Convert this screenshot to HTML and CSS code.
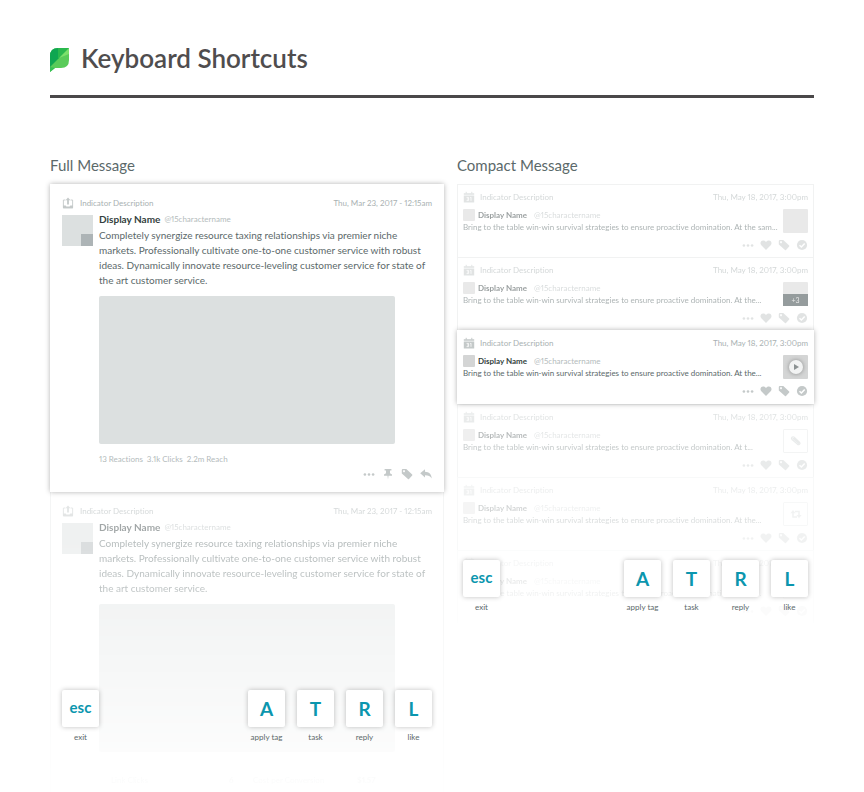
FILE: index.html
```html
<!DOCTYPE html>
<html lang="en">
<head>
<meta charset="utf-8">
<meta name="viewport" content="width=device-width, initial-scale=1">
<title>Keyboard Shortcuts</title>
<link rel="stylesheet" href="styles.css">
</head>
<body>
<svg class="sprite" aria-hidden="true">
  <symbol id="outbox" viewBox="0 0 12 12"><path d="M3.400 3H1.400v7.800h9.200V3h-2" fill="none" stroke="currentColor" stroke-width=".9"/><path d="M1 8.600h2.600l.8 1h3.200l.8-1H11v2.600H1z" fill="currentColor"/><path d="M6 .4l2.400 2.800H6.900v4.400H5.100V3.200H3.600z" fill="currentColor"/></symbol>
  <symbol id="calendar" viewBox="0 0 12 12"><path d="M.8 2.200h10.400v1.600H.8zM.8 4.500h10.400V11.500H.8z" fill="currentColor"/><path d="M3.200 .8v2M8.800 .8v2" stroke="currentColor" stroke-width="1"/><path d="M3.600 6.400h2v3.200h-2M4 8h1.600M7.200 6.600l.8-.4v3.600" fill="none" stroke="#fff" stroke-width=".8"/></symbol>
  <symbol id="dots" viewBox="0 0 12 12"><g fill="currentColor"><circle cx="1.900" cy="6.500" r="1.300"/><circle cx="6" cy="6.500" r="1.300"/><circle cx="10.100" cy="6.500" r="1.300"/></g></symbol>
  <symbol id="pin" viewBox="0 0 12 12"><path d="M2.600 1h6.800v1.600H8v2.700l2 1.300v1.200H6.500L6 11.500l-.5-3.700H2V6.600l2-1.300V2.600H2.600z" fill="currentColor"/></symbol>
  <symbol id="tag" viewBox="0 0 12 12"><path fill-rule="evenodd" d="M.8 2Q.8 1 1.800 1H5.300L11.200 6.600Q11.600 7.100 11.200 7.600L8 11Q7.500 11.400 7 11L.8 5.400zM3 2.200a.95.95 0 1 0 .01 0z" fill="currentColor"/></symbol>
  <symbol id="reply" viewBox="0 0 12 12"><path d="M.2 5.300L5 1.200v2.500c4 .1 6.600 2.400 6.700 6.800C10.400 8.200 8.400 7.200 5 7.200v2.300z" fill="currentColor"/></symbol>
  <symbol id="heart" viewBox="0 0 12 12"><path d="M6 11L1.300 6.300C-.4 4.400.6 1.500 3.100 1.500 4.500 1.500 5.500 2.100 6 3 6.500 2.100 7.500 1.500 8.900 1.500c2.500 0 3.500 2.900 1.800 4.800z" fill="currentColor"/></symbol>
  <symbol id="check" viewBox="0 0 12 12"><circle cx="6" cy="6" r="5.100" fill="currentColor"/><path d="M3.500 6.200l1.900 1.800 3.300-3.600" fill="none" stroke="#fff" stroke-width="1.500"/></symbol>
  <symbol id="clip" viewBox="0 0 12 12"><path d="M3 5.200l4.500 4.100c1.600 1.200 3.500-.7 2-2.200L4.200 2.200C2.600.9.500 2.900 2 4.500l5 4.400M3 3.400l5.500 5.100M4.200 3.300l5 4.600" fill="none" stroke="currentColor" stroke-width="1.100" stroke-linecap="round"/></symbol>
  <symbol id="retweet" viewBox="0 0 12 12"><path d="M3 4v5h4M9 8V3.500H5" fill="none" stroke="currentColor" stroke-width="1.500"/><path d="M.5 5.200L3 2l2.500 3.200zM6.500 7L9 10.200 11.500 7z" fill="currentColor"/></symbol>
</svg>

<header class="page-head">
  <svg class="logo" viewBox="0 0 19 24" aria-hidden="true">
    <path d="M0 24V8Q0 0 8 0H19V12Q19 20 11 20H5Z" fill="#59cb59"/>
    <path d="M8 0H19L0 19V8Q0 0 8 0Z" fill="#0fa651"/>
    <path d="M8 0H19L8 11Z" fill="#29b84d"/>
    <path d="M19 0V6L9 10Z" fill="#7be06b"/>
    <path d="M0 19V24L5 20Z" fill="#36c155"/>
  </svg>
  <h1>Keyboard Shortcuts</h1>
</header>

<main class="columns">
  <section class="panel">
    <h2>Full Message</h2>
    <div class="stage">
      <article class="full active">
        <div class="meta"><svg class="icon"><use href="#outbox"/></svg><span>Indicator Description</span><time>Thu, Mar 23, 2017 - 12:15am</time></div>
        <div class="content">
          <div class="avatar"></div>
          <div class="body">
            <div class="who"><strong>Display Name</strong><span>@15charactername</span></div>
            <p>Completely synergize resource taxing relationships via premier niche<br>markets. Professionally cultivate one-to-one customer service with robust<br>ideas. Dynamically innovate resource-leveling customer service for state of<br>the art customer service.</p>
            <div class="media"></div>
            <div class="stats"><span>13 Reactions</span><span>3.1k Clicks</span><span>2.2m Reach</span></div>
          </div>
        </div>
        <div class="actions">
          <button aria-label="More"><svg class="icon"><use href="#dots"/></svg></button>
          <button aria-label="Pin"><svg class="icon"><use href="#pin"/></svg></button>
          <button aria-label="Tag"><svg class="icon"><use href="#tag"/></svg></button>
          <button aria-label="Reply"><svg class="icon"><use href="#reply"/></svg></button>
        </div>
      </article>
      <article class="full faded">
        <div class="meta"><svg class="icon"><use href="#outbox"/></svg><span>Indicator Description</span><time>Thu, Mar 23, 2017 - 12:15am</time></div>
        <div class="content">
          <div class="avatar"></div>
          <div class="body">
            <div class="who"><strong>Display Name</strong><span>@15charactername</span></div>
            <p>Completely synergize resource taxing relationships via premier niche<br>markets. Professionally cultivate one-to-one customer service with robust<br>ideas. Dynamically innovate resource-leveling customer service for state of<br>the art customer service.</p>
            <div class="media"></div>
            <div class="results"><span>Link Clicks</span><b>6</b><span>Cost per Conversion</span><b>$1.57</b></div>
          </div>
        </div>
      </article>
      <div class="keys keys-full">
        <div class="key word"><kbd>esc</kbd><span>exit</span></div>
        <div class="key"><kbd>A</kbd><span>apply tag</span></div>
        <div class="key"><kbd>T</kbd><span>task</span></div>
        <div class="key"><kbd>R</kbd><span>reply</span></div>
        <div class="key"><kbd>L</kbd><span>like</span></div>
      </div>
    </div>
  </section>

  <section class="panel">
    <h2>Compact Message</h2>
    <div class="stage">
      <div class="list" id="list"></div>
      <div class="keys keys-compact">
        <div class="key word"><kbd>esc</kbd><span>exit</span></div>
        <div class="key"><kbd>A</kbd><span>apply tag</span></div>
        <div class="key"><kbd>T</kbd><span>task</span></div>
        <div class="key"><kbd>R</kbd><span>reply</span></div>
        <div class="key"><kbd>L</kbd><span>like</span></div>
      </div>
    </div>
  </section>
</main>
<script src="messages.js"></script>
</body>
</html>
```
FILE: styles.css
```css
* { box-sizing: border-box; }

body {
  margin: 0;
  padding: 39px 50px 0;
  background: #fff;
  color: #5b696a;
  font-family: Lato, "Open Sans", sans-serif;
  font-size: 8px;
  line-height: 12px;
  font-variant-ligatures: none;
  font-variant-numeric: proportional-nums;
}

.sprite { position: absolute; width: 0; height: 0; }

.page-head {
  display: flex;
  align-items: center;
  gap: 12px;
  padding-bottom: 18px;
  border-bottom: 3px solid #4a4849;
}
.logo { width: 19px; height: 24px; margin-top: 4px; }
h1 {
  margin: 0;
  color: #4f4d4e;
  font-size: 26px;
  line-height: 38px;
  font-weight: 600;
}

.columns {
  display: grid;
  grid-template-columns: 394fr 357fr;
  gap: 13px;
  align-items: start;
  padding-top: 57px;
}
h2 {
  margin: 0 0 9px;
  font-size: 15px;
  line-height: 20px;
  font-weight: 400;
}
.stage { position: relative; }

.icon { display: block; width: 12px; height: 12px; }
.meta {
  display: flex;
  align-items: center;
  color: #a9b1b2;
  white-space: nowrap;
}
.meta .icon { color: #c4c9c9; }
.meta time { margin-left: auto; }
.actions { display: flex; justify-content: flex-end; color: #c4c9c9; }
.actions button {
  padding: 0;
  border: 0;
  background: none;
  color: inherit;
}
.active {
  position: relative;
  z-index: 1;
  background: #fff;
  box-shadow: 0 0 5px rgba(0, 0, 0, .3);
}

.full { padding: 12px; }
.full .meta { gap: 6px; height: 14px; margin-bottom: 3px; }
.content { display: flex; gap: 6px; }
.avatar {
  width: 31px;
  height: 31px;
  flex: none;
  display: flex;
  align-items: flex-end;
  justify-content: flex-end;
  margin-top: 2px;
  background: #dce0e0;
}
.avatar::after { content: ""; width: 12px; height: 12px; background: #adb4b6; }
.body { flex: 1; min-width: 0; }
.who { display: flex; gap: 4px; white-space: nowrap; color: #b4bbbc; }
.who strong { color: #343f40; font-size: 10px; font-weight: 700; }
.body p {
  margin: 3px 0 8px;
  font-size: 10px;
  line-height: 15px;
  white-space: nowrap;
}
.media {
  width: 89%;
  height: 148px;
  border-radius: 2px;
  background: #dce0e0;
}
.stats { display: flex; gap: 4px; margin: 9px 0 3px; color: #b4bbbc; }
.full .actions { gap: 7px; }

.full.faded {
  border: solid #e8eaea;
  border-width: 0 1px;
  padding: 12px 11px 0;
  mask-image: linear-gradient(rgba(0, 0, 0, .5), rgba(0, 0, 0, .38) 35%, rgba(0, 0, 0, .1) 85%, rgba(0, 0, 0, .04));
}
.results {
  display: grid;
  grid-template-columns: 118px 24px 104px auto;
  padding: 22px 12px 6px;
  color: #b4bbbc;
}

.compact {
  padding: 5px 5px 6px;
  border: 1px solid #e4e7e7;
  border-bottom: 0;
}
.compact.active { border-color: #fff; padding-bottom: 7px; }
.compact .meta { gap: 5px; height: 13px; margin-bottom: 6px; }
.row { display: flex; justify-content: space-between; height: 24px; }
.compact .who { align-items: center; gap: 3px; }
.compact .who strong { font-size: 8px; }
.compact .who span { margin-left: 4px; }
.face { width: 12px; height: 12px; border-radius: 1px; background: #d4d5d5; }
.compact p { margin: 0; white-space: nowrap; }
.thumb {
  display: flex;
  align-items: center;
  justify-content: center;
  width: 25px;
  height: 24px;
  border-radius: 1px;
  background: #d4d5d5;
  color: #c4c9c9;
}
.thumb.more { align-items: flex-end; }
.more span {
  width: 100%;
  background: #2e3b3d;
  color: #d4d5d5;
  font-size: 7px;
  text-align: center;
}
.thumb.outline { border: 1px solid #dfe1e1; background: #fff; }
.play {
  width: 14px;
  height: 14px;
  border-radius: 50%;
  background: #f2f3f3;
  box-shadow: 0 0 4px rgba(0, 0, 0, .35);
}
.compact .actions { gap: 6px; margin-top: 6px; }
.dim-1 { opacity: .5; }
.dim-2 { opacity: .36; }
.dim-3 { opacity: .22; }
.dim-4 { mask-image: linear-gradient(rgba(0, 0, 0, .14), rgba(0, 0, 0, .06)); }

.keys {
  position: absolute;
  z-index: 2;
  display: flex;
  gap: 12px;
}
.keys-full { left: 12px; right: 12px; bottom: 49px; }
.keys-compact { left: 6px; right: 6px; bottom: 10px; }
.key {
  display: flex;
  flex-direction: column;
  align-items: center;
  gap: 4px;
  width: 37px;
  white-space: nowrap;
}
.key:first-child { margin-right: auto; }
kbd {
  width: 37px;
  height: 37px;
  border-radius: 2px;
  background: #fff;
  box-shadow: 0 0 5px rgba(0, 0, 0, .25);
  color: #0b96ae;
  font: 700 19px/38px Lato, sans-serif;
  text-align: center;
}
.word kbd { font-size: 15px; line-height: 35px; }
```
FILE: messages.js
```js
const icon = (name) => `<svg class="icon"><use href="#${name}"/></svg>`;
const button = (name, label) => `<button aria-label="${label}">${icon(name)}</button>`;
const play = '<svg class="play" viewBox="0 0 14 14"><path d="M5 4v6l5-3z" fill="#8c9293"/></svg>';

const messages = [
  { dim: "dim-1", end: "At the sam...", thumb: "", kind: "" },
  { dim: "dim-1", end: "At the...", thumb: "<span>+3</span>", kind: "more" },
  { dim: "active", end: "At the...", thumb: play, kind: "" },
  { dim: "dim-2", end: "At t...", thumb: icon("clip"), kind: "outline" },
  { dim: "dim-3", end: "At the...", thumb: icon("retweet"), kind: "outline" },
  { dim: "dim-4", end: "At the...", thumb: "", kind: "outline" },
];

document.getElementById("list").innerHTML = messages.map((m) => `
  <article class="compact ${m.dim}">
    <div class="meta">${icon("calendar")}<span>Indicator Description</span><time>Thu, May 18, 2017, 3:00pm</time></div>
    <div class="row">
      <div>
        <div class="who"><i class="face"></i><strong>Display Name</strong><span>@15charactername</span></div>
        <p>Bring to the table win-win survival strategies to ensure proactive domination. ${m.end}</p>
      </div>
      <div class="thumb ${m.kind}">${m.thumb}</div>
    </div>
    <div class="actions">${button("dots", "More")}${button("heart", "Like")}${button("tag", "Tag")}${button("check", "Complete")}</div>
  </article>`).join("");
```
